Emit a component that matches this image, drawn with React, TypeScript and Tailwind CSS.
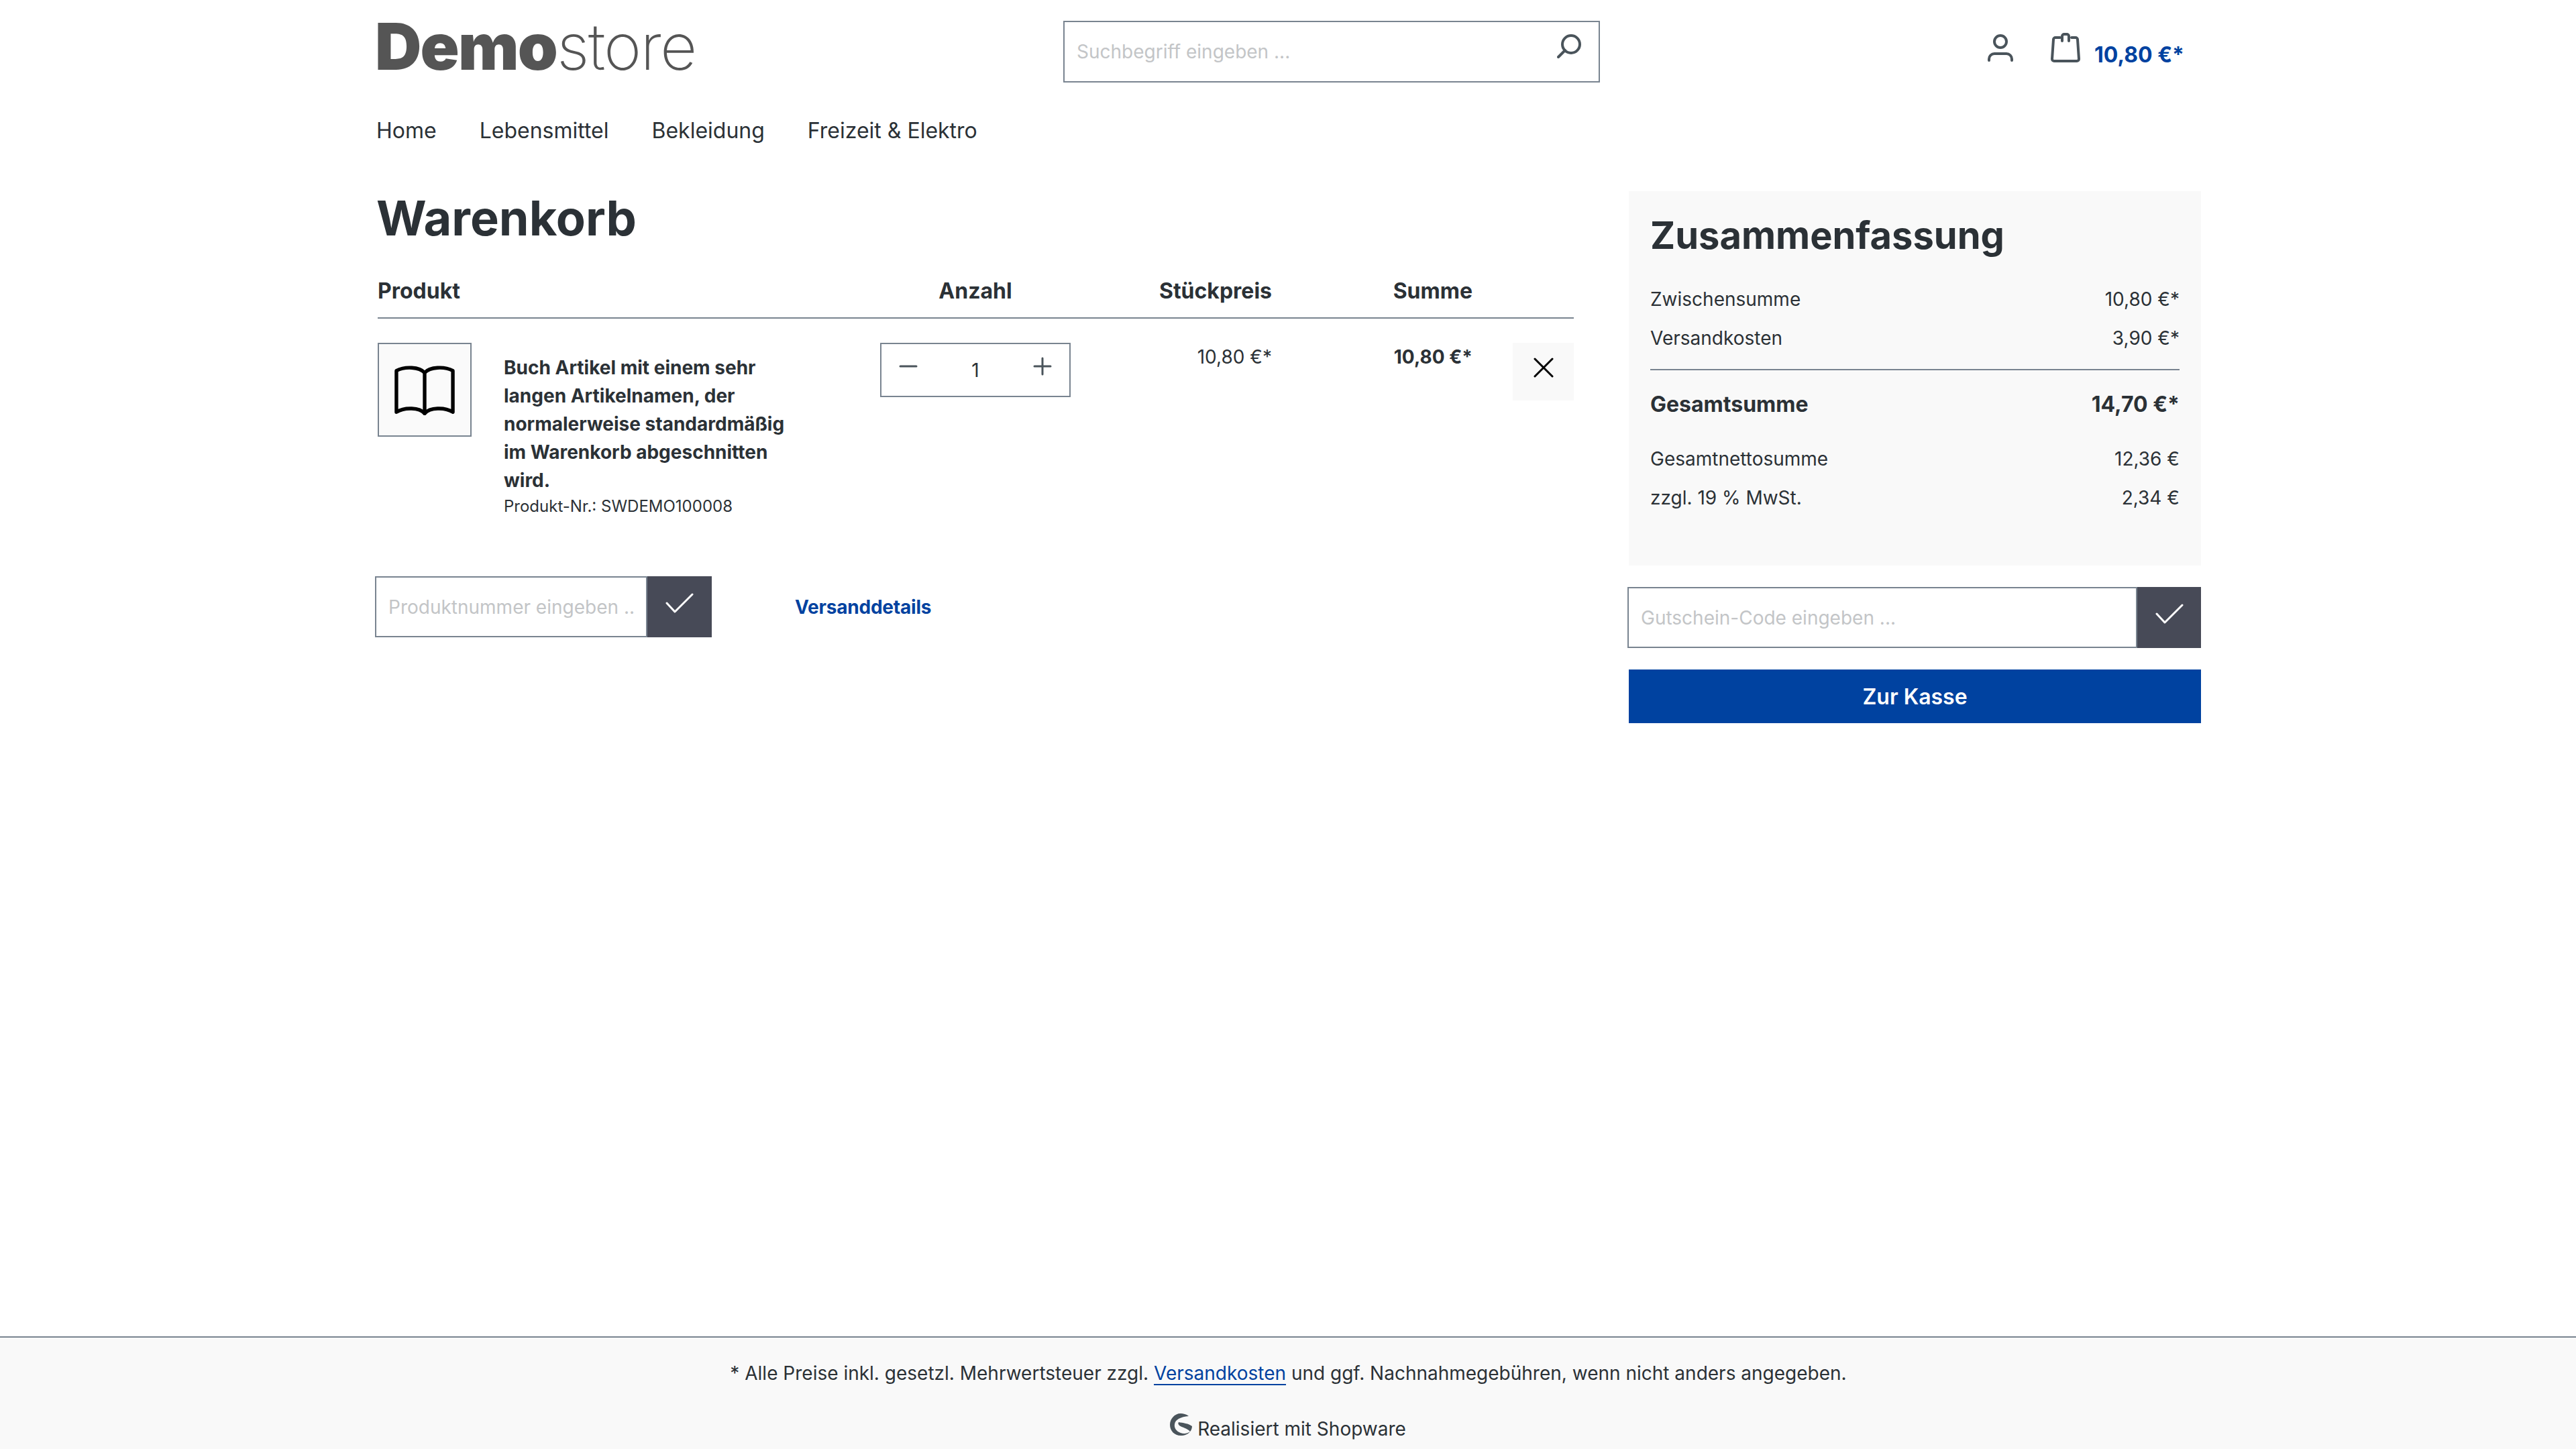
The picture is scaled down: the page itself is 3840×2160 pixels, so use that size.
import React from "react";

const Check = () => (
  <svg viewBox="0 0 42 30" className="w-[42px] h-[30px]" fill="none" stroke="#fff" strokeWidth="3" strokeLinecap="round" strokeLinejoin="round">
    <path d="M2 15 L14 28 L40 2" />
  </svg>
);

function Row({ label, value, className = "" }: { label: string; value: string; className?: string }) {
  return (
    <div className={"flex justify-between text-[28px] leading-[42px] " + className}>
      <span>{label}</span>
      <span>{value}</span>
    </div>
  );
}

export default function App() {
  return (
    <div className="min-h-[2160px] flex flex-col bg-white text-[#2b3136] text-[28px] leading-[42px] [font-family:Inter,'Liberation_Sans',sans-serif]">
      <div className="w-[2722px] mx-auto">
        <header className="flex items-start pt-[31px] h-[123px]">
          <div className="w-[1026px] flex text-[#555555] text-[96px] leading-[76px] tracking-[-1.8px] h-[76px]">
            <span className="font-black">Demo</span>
            <span className="font-extralight">store</span>
          </div>
          <div className="w-[800px] h-[92px] border-2 border-[#798490] flex items-center">
            <input
              readOnly
              placeholder="Suchbegriff eingeben ..."
              className="flex-1 min-w-0 h-full pl-[18px] text-[28px] outline-none placeholder:text-[#c3c5c7]"
            />
            <svg viewBox="0 0 36 36" className="w-[36px] h-[36px] mr-[26px] mb-[16px]" fill="none" stroke="#4a545b" strokeWidth="4" strokeLinecap="round">
              <circle cx="21" cy="15" r="13" />
              <path d="M12 24 L2 34" />
            </svg>
          </div>
          <div className="ml-auto pr-[25px] flex items-start">
            <svg viewBox="0 0 38 42" className="w-[38px] h-[42px] mt-[20px]" fill="none" stroke="#4a545b" strokeWidth="4" strokeLinecap="round">
              <circle cx="19" cy="11" r="9" />
              <path d="M2 39 V37 a8 8 0 0 1 8-8 H28 a8 8 0 0 1 8 8 V39" />
            </svg>
            <svg viewBox="0 0 44 44" className="w-[44px] h-[44px] ml-[56px] mt-[18px]" fill="none" stroke="#4a545b" strokeWidth="4" strokeLinecap="round" strokeLinejoin="round">
              <path d="M14 7 H7 a3 3 0 0 0 -3 3 L2 39 a3 3 0 0 0 3 3 H39 a3 3 0 0 0 3-3 L40 10 a3 3 0 0 0 -3-3 H31" />
              <path d="M17 12 V5 a3 3 0 0 1 3-3 h4 a3 3 0 0 1 3 3 V12" />
            </svg>
            <span className="ml-[21px] mt-[27px] text-[32px] leading-[48px] font-bold text-[#0042a0]">10,80 €*</span>
          </div>
        </header>

        <nav className="mt-[48px] flex gap-[64px] text-[32px] leading-[48px] pl-[2px]">
          <span>Home</span>
          <span>Lebensmittel</span>
          <span>Bekleidung</span>
          <span>Freizeit &amp; Elektro</span>
        </nav>

        <main className="mt-[66px] flex justify-between items-start">
          <section className="w-[1787px]">
            <h1 className="ml-[2px] text-[72px] leading-[80px] font-bold">Warenkorb</h1>
            <div className="ml-[4px] h-[110px] pt-[45px] border-b-2 border-[#798490] grid grid-cols-[749px_284px_300px_299px_151px] text-[32px] leading-[48px] font-bold">
              <span>Produkt</span>
              <span className="text-center">Anzahl</span>
              <span className="text-right">Stückpreis</span>
              <span className="text-right">Summe</span>
              <span />
            </div>
            <div className="ml-[4px] pt-[36px] grid grid-cols-[749px_284px_300px_299px_151px] items-start">
              <div className="flex gap-[48px]">
                <div className="w-[140px] h-[140px] border-2 border-[#798490] bg-[#fafafa] flex items-center justify-center">
                  <svg viewBox="0 0 92 76" className="w-[90px] h-[76px]" fill="none" stroke="#000" strokeWidth="5.5" strokeLinecap="round" strokeLinejoin="round">
                    <path d="M46 12 C38 3 16 2 3 9 V72 C16 64 38 65 46 74 C54 65 76 64 89 72 V9 C76 2 54 3 46 12 Z" />
                    <path d="M46 12 V74" />
                  </svg>
                </div>
                <div className="w-[440px] pt-[16px]">
                  <div className="font-bold">Buch Artikel mit einem sehr langen Artikelnamen, der normalerweise standardmäßig im Warenkorb abgeschnitten wird.</div>
                  <div className="text-[24px] leading-[36px]">Produkt-Nr.: SWDEMO100008</div>
                </div>
              </div>
              <div className="h-[81px] border-2 border-[#798490] flex items-center justify-between px-[26px]">
                <svg viewBox="0 0 28 28" className="w-[28px] h-[28px] mb-[12px]" stroke="#4a545b" strokeWidth="3" strokeLinecap="round"><path d="M2 14 H26" /></svg>
                <span className="text-[28px] leading-[42px]">1</span>
                <svg viewBox="0 0 28 28" className="w-[28px] h-[28px] mb-[12px]" stroke="#4a545b" strokeWidth="3" strokeLinecap="round"><path d="M2 14 H26 M14 2 V26" /></svg>
              </div>
              <div className="text-right">10,80 €*</div>
              <div className="text-right font-bold">10,80 €*</div>
              <div className="flex justify-end">
                <div className="w-[91px] h-[86px] bg-[#f9f9f9] flex items-center justify-center">
                  <svg viewBox="0 0 30 30" className="w-[30px] h-[30px] mb-[12px]" stroke="#000" strokeWidth="3" strokeLinecap="round"><path d="M2 2 L28 28 M28 2 L2 28" /></svg>
                </div>
              </div>
            </div>
            <div className="mt-[86px] flex items-center">
              <div className="w-[502px] h-[91px] flex">
                <input
                  readOnly
                  placeholder="Produktnummer eingeben ..."
                  className="w-[406px] h-full border-2 border-[#798490] pl-[18px] pr-[16px] text-[28px] outline-none placeholder:text-[#c3c5c7]"
                />
                <div className="w-[96px] h-full bg-[#474a57] flex items-center justify-center">
                  <div className="pb-[12px] flex"><Check /></div>
                </div>
              </div>
              <a className="ml-[124px] font-bold tracking-[-0.2px] text-[#0042a0]">Versanddetails</a>
            </div>
          </section>

          <aside className="w-[853px]">
            <div className="h-[558px] bg-[#f9f9f9] px-[32px] pt-[32px]">
              <h2 className="text-[56px] leading-[68px] font-bold">Zusammenfassung</h2>
              <Row className="mt-[40px]" label="Zwischensumme" value="10,80 €*" />
              <Row className="mt-[16px]" label="Versandkosten" value="3,90 €*" />
              <div className="mt-[25px] h-[2px] bg-[#798490]" />
              <div className="mt-[27px] flex justify-between text-[32px] leading-[48px] font-bold">
                <span>Gesamtsumme</span>
                <span>14,70 €*</span>
              </div>
              <Row className="mt-[36px]" label="Gesamtnettosumme" value="12,36 €" />
              <Row className="mt-[16px]" label="zzgl. 19 % MwSt." value="2,34 €" />
            </div>
            <div className="mt-[32px] -ml-[2px] h-[91px] flex">
              <input
                readOnly
                placeholder="Gutschein-Code eingeben ..."
                className="flex-1 min-w-0 h-full border-2 border-[#798490] pl-[18px] text-[28px] outline-none placeholder:text-[#c3c5c7]"
              />
              <div className="w-[95px] h-full bg-[#474a57] flex items-center justify-center">
                <div className="pb-[12px] flex"><Check /></div>
              </div>
            </div>
            <div className="mt-[32px] h-[80px] pt-[2px] bg-[#0042a0] text-white text-[32px] font-semibold flex items-center justify-center">Zur Kasse</div>
          </aside>
        </main>
      </div>

      <footer className="mt-auto h-[168px] border-t-2 border-[#798490] bg-[#f9f9f9] pt-[32px] text-center">
        <div className="pl-[1px]">
          * Alle Preise inkl. gesetzl. Mehrwertsteuer zzgl. <a className="text-[#0042a0] underline underline-offset-[6px] decoration-2">Versandkosten</a> und ggf. Nachnahmegebühren, wenn nicht anders angegeben.
        </div>
        <div className="mt-[41px] flex justify-center items-start gap-[8px]">
          <svg viewBox="0 0 33 33" className="w-[33px] h-[33px] -mt-[2px]" fill="#4a545b">
            <path d="M28 4 C24 1 20 0 16 0 C7 0 0 8 0 17 C0 26 7 33 16 33 C22 33 27 31 30 27 C26 30 21 31 16 29 C10 27 6 22 7 16 C8 9 16 5 28 4 Z" />
            <path d="M13 13 C19 14 28 15 33 19 C33 23 31 26 30 27 C26 22 18 21 14 18 C12 16 12 14 13 13 Z" />
          </svg>
          <span>Realisiert mit Shopware</span>
        </div>
      </footer>
    </div>
  );
}
